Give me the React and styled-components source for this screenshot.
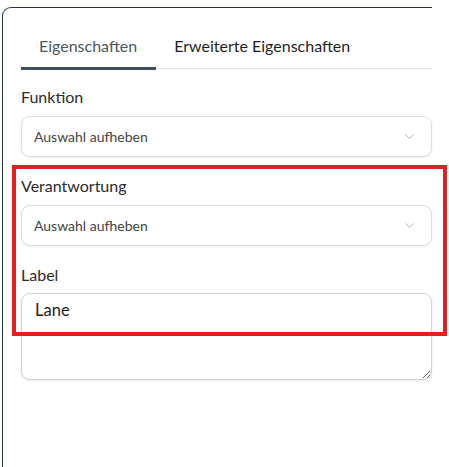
import React from 'react';
import styled, { createGlobalStyle } from 'styled-components';
import { ChevronDown } from 'lucide-react';

const GlobalStyle = createGlobalStyle`
   body {
      margin: 0;
      background: #fff;
      font-family: "Lato", "Open Sans", sans-serif;
   }
`;

const Page = styled.div`
   position: relative;
   width: 449px;
   height: 467px;
   overflow: hidden;
   padding: 7px 0 0 2px;
   box-sizing: border-box;
`;

const Panel = styled.div`
   width: 430px;
   height: 470px;
   box-sizing: border-box;
   border-left: 1px solid #1d3452;
   border-top: 1px solid #1d3452;
   border-top-left-radius: 9px;
   padding: 16px 0 0 18px;
`;

const TabList = styled.div`
   display: flex;
   border-bottom: 1px solid #e1e4e8;
`;

const Tab = styled.div`
   padding: 11px 19px 10px 18px;
   font-size: 16px;
   line-height: 22px;
   color: ${({ active }) => (active ? '#4b5662' : '#1f1f1f')};
   border-bottom: 3px solid ${({ active }) => (active ? '#3f4e5e' : 'transparent')};
   margin-bottom: -2px;
`;

const Field = styled.div`
   display: flex;
   flex-direction: column;
   margin-top: ${({ first }) => (first ? '18px' : '19px')};
`;

const Label = styled.label`
   font-size: 16px;
   line-height: 20px;
   color: #2b2b2b;
   margin-bottom: ${({ tight }) => (tight ? '8px' : '9px')};
`;

const Select = styled.div`
   display: flex;
   align-items: center;
   justify-content: space-between;
   height: 41px;
   box-sizing: border-box;
   padding: 0 14px 0 12px;
   border: 1px solid #dcdcdc;
   border-radius: 9px;
   box-shadow: 0 1px 3px rgba(0, 0, 0, 0.08);
   font-size: 14px;
   color: #444;
`;

const TextArea = styled.textarea`
   height: 87px;
   box-sizing: border-box;
   padding: 5px 13px;
   border: 1px solid #d4d4d4;
   border-radius: 9px;
   box-shadow: 0 1px 3px rgba(0, 0, 0, 0.1);
   font-family: "Lato", "Open Sans", sans-serif;
   font-size: 16.5px;
   line-height: 22px;
   color: #222;
   resize: vertical;
   outline: none;
`;

const Highlight = styled.div`
   position: absolute;
   left: 12px;
   top: 165px;
   width: 435px;
   height: 171px;
   box-sizing: border-box;
   border: 4px solid #e3201f;
   pointer-events: none;
`;

const Dropdown = ({ value }) => (
   <Select>
      <span>{value}</span>
      <ChevronDown size={15} color="#b5b5b5" strokeWidth={1.6} />
   </Select>
);

const App = () => (
   <Page>
      <GlobalStyle />
      <Panel>
         <TabList>
            <Tab active>Eigenschaften</Tab>
            <Tab>Erweiterte Eigenschaften</Tab>
         </TabList>
         <Field first>
            <Label>Funktion</Label>
            <Dropdown value="Auswahl aufheben" />
         </Field>
         <Field>
            <Label>Verantwortung</Label>
            <Dropdown value="Auswahl aufheben" />
         </Field>
         <Field>
            <Label tight>Label</Label>
            <TextArea defaultValue="Lane" />
         </Field>
      </Panel>
      <Highlight />
   </Page>
);

export default App;
